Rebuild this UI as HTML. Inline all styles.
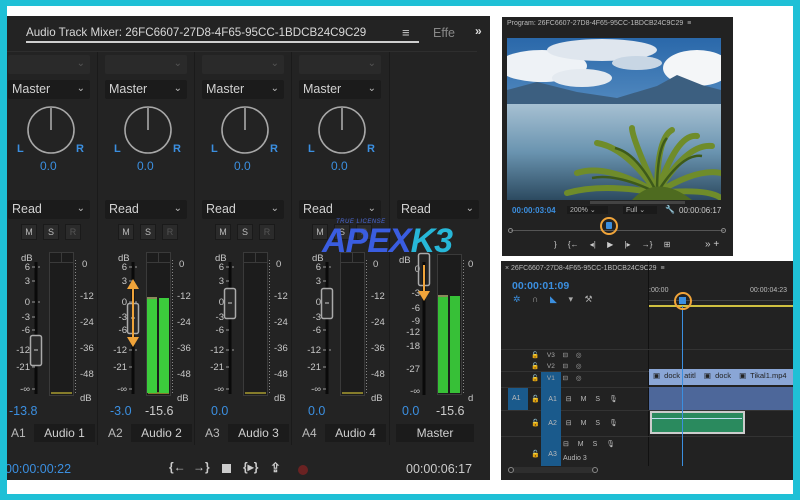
<!DOCTYPE html>
<html><head><meta charset="utf-8"><style>
*{margin:0;padding:0;box-sizing:border-box}
body{width:800px;height:500px;background:#1fc0d6;position:relative;overflow:hidden;font-family:"Liberation Sans",sans-serif}
.a{position:absolute}
.wh{left:7px;top:6px;width:786px;height:488px;background:#fff}
.mix{left:7px;top:16px;width:483px;height:464px;background:#232323;overflow:hidden}
.s{position:absolute;top:0;width:97px;height:500px}
.dd{position:absolute;height:19px;background:#1b1b1b;border-radius:2px;color:#d2d2d2;font-size:12.5px;line-height:19px;padding-left:4px}
.dd i{position:absolute;right:5px;top:-1px;font-style:normal;font-size:10px;color:#bbb}
.bl{color:#3b8fe0}
.btn{position:absolute;top:224px;width:16px;height:16px;border:1px solid #1a1a1a;background:#2b2b2b;color:#bbb;font-size:9px;line-height:14px;text-align:center}
.tl{position:absolute;top:424px;height:18px;background:#1b1b1b;color:#d0d0d0;font-size:12px;line-height:18px;text-align:center}
.tr{position:absolute;top:460px;font-size:13px;color:#ccc;font-weight:bold}
</style></head><body>
<div class="a wh"></div>

<!-- MIXER -->
<div class="a mix">
<div class="a" style="left:19px;top:10px;color:#d8d8d8;font-size:11.6px;white-space:nowrap">Audio Track Mixer: 26FC6607-27D8-4F65-95CC-1BDCB24C9C29</div>
<div class="a" style="left:395px;top:9px;color:#ccc;font-size:13px">≡</div>
<div class="a" style="left:426px;top:10px;color:#888;font-size:12.5px">Effe</div>
<div class="a" style="left:468px;top:8px;color:#ddd;font-size:12px;font-weight:bold">»</div>
<div class="a" style="left:19px;top:25px;width:393px;height:2px;background:#cfcfcf"></div>
<div class="a" style="left:0;top:35px;width:470px;height:1px;background:#2e2e2e"></div>

<div class="a" style="left:-7px;top:-16px;width:500px;height:500px">
<div class="a" style="left:97px;top:52px;width:1px;height:393px;background:#1a1a1a"></div>
<div class="a" style="left:194px;top:52px;width:1px;height:393px;background:#1a1a1a"></div>
<div class="a" style="left:291px;top:52px;width:1px;height:393px;background:#1a1a1a"></div>
<div class="a" style="left:389px;top:52px;width:1px;height:393px;background:#1a1a1a"></div>

<div class="s" style="left:0">
<div class="dd" style="left:8px;top:55px;width:82px;background:#2a2a2a"><i style="color:#555">⌄</i></div>
<div class="dd" style="left:8px;top:80px;width:82px">Master<i>⌄</i></div>
<svg class="a" style="left:26px;top:105px" width="50" height="50"><circle cx="25" cy="25" r="23" fill="none" stroke="#a8a8a8" stroke-width="1.6"/><line x1="25" y1="3" x2="25" y2="25" stroke="#a8a8a8" stroke-width="1.6"/></svg>
<div class="a bl" style="left:17px;top:143px;font-size:11px;font-weight:bold">L</div>
<div class="a bl" style="left:76px;top:143px;font-size:11px;font-weight:bold">R</div>
<div class="a bl" style="left:40px;top:159px;font-size:12px">0.0</div>
<div class="dd" style="left:8px;top:200px;width:82px">Read<i>⌄</i></div>
<div class="btn" style="left:21px">M</div><div class="btn" style="left:43px">S</div><div class="btn" style="left:65px;color:#555">R</div>
</div>
<div class="s" style="left:97px">
<div class="dd" style="left:8px;top:55px;width:82px;background:#2a2a2a"><i style="color:#555">⌄</i></div>
<div class="dd" style="left:8px;top:80px;width:82px">Master<i>⌄</i></div>
<svg class="a" style="left:26px;top:105px" width="50" height="50"><circle cx="25" cy="25" r="23" fill="none" stroke="#a8a8a8" stroke-width="1.6"/><line x1="25" y1="3" x2="25" y2="25" stroke="#a8a8a8" stroke-width="1.6"/></svg>
<div class="a bl" style="left:17px;top:143px;font-size:11px;font-weight:bold">L</div>
<div class="a bl" style="left:76px;top:143px;font-size:11px;font-weight:bold">R</div>
<div class="a bl" style="left:40px;top:159px;font-size:12px">0.0</div>
<div class="dd" style="left:8px;top:200px;width:82px">Read<i>⌄</i></div>
<div class="btn" style="left:21px">M</div><div class="btn" style="left:43px">S</div><div class="btn" style="left:65px;color:#555">R</div>
</div>
<div class="s" style="left:194px">
<div class="dd" style="left:8px;top:55px;width:82px;background:#2a2a2a"><i style="color:#555">⌄</i></div>
<div class="dd" style="left:8px;top:80px;width:82px">Master<i>⌄</i></div>
<svg class="a" style="left:26px;top:105px" width="50" height="50"><circle cx="25" cy="25" r="23" fill="none" stroke="#a8a8a8" stroke-width="1.6"/><line x1="25" y1="3" x2="25" y2="25" stroke="#a8a8a8" stroke-width="1.6"/></svg>
<div class="a bl" style="left:17px;top:143px;font-size:11px;font-weight:bold">L</div>
<div class="a bl" style="left:76px;top:143px;font-size:11px;font-weight:bold">R</div>
<div class="a bl" style="left:40px;top:159px;font-size:12px">0.0</div>
<div class="dd" style="left:8px;top:200px;width:82px">Read<i>⌄</i></div>
<div class="btn" style="left:21px">M</div><div class="btn" style="left:43px">S</div><div class="btn" style="left:65px;color:#555">R</div>
</div>
<div class="s" style="left:291px">
<div class="dd" style="left:8px;top:55px;width:82px;background:#2a2a2a"><i style="color:#555">⌄</i></div>
<div class="dd" style="left:8px;top:80px;width:82px">Master<i>⌄</i></div>
<svg class="a" style="left:26px;top:105px" width="50" height="50"><circle cx="25" cy="25" r="23" fill="none" stroke="#a8a8a8" stroke-width="1.6"/><line x1="25" y1="3" x2="25" y2="25" stroke="#a8a8a8" stroke-width="1.6"/></svg>
<div class="a bl" style="left:17px;top:143px;font-size:11px;font-weight:bold">L</div>
<div class="a bl" style="left:76px;top:143px;font-size:11px;font-weight:bold">R</div>
<div class="a bl" style="left:40px;top:159px;font-size:12px">0.0</div>
<div class="dd" style="left:8px;top:200px;width:82px">Read<i>⌄</i></div>
<div class="btn" style="left:21px">M</div><div class="btn" style="left:43px">S</div><div class="btn" style="left:65px;color:#555">R</div>
</div>
<div class="s" style="left:389px">
<div class="dd" style="left:8px;top:200px;width:82px">Read<i>⌄</i></div>
</div>

<svg class="a" style="left:0;top:245px" width="490" height="160" font-family="Liberation Sans" font-size="9.5" fill="#c8c8c8">
<defs>
<g id="fd">
<text x="21" y="16" fill="#c8c8c8">dB</text>
<g text-anchor="end"><text x="30" y="25">6</text><text x="30" y="39">3</text><text x="30" y="60">0</text><text x="30" y="75">-3</text><text x="30" y="88">-6</text><text x="30" y="108">-12</text><text x="30" y="125">-21</text><text x="30" y="147">-∞</text></g>
<line x1="36" y1="17" x2="36" y2="149" stroke="#0a0a0a" stroke-width="3"/>
<g stroke="#999" stroke-width="1"><line x1="32" y1="22" x2="35" y2="22"/><line x1="32" y1="36" x2="35" y2="36"/><line x1="32" y1="57" x2="35" y2="57"/><line x1="32" y1="72" x2="35" y2="72"/><line x1="32" y1="85" x2="35" y2="85"/><line x1="32" y1="105" x2="35" y2="105"/><line x1="32" y1="122" x2="35" y2="122"/><line x1="32" y1="144" x2="35" y2="144"/><line x1="38" y1="22" x2="40" y2="22"/><line x1="38" y1="57" x2="40" y2="57"/><line x1="38" y1="105" x2="40" y2="105"/></g>
<rect x="49.5" y="7.5" width="24" height="143" fill="#1c1c1c" stroke="#3a3a3a"/>
<line x1="49" y1="17.5" x2="74" y2="17.5" stroke="#3a3a3a"/><line x1="61.5" y1="8" x2="61.5" y2="17" stroke="#3a3a3a"/>
<line x1="51" y1="148" x2="72" y2="148" stroke="#a89c30" stroke-width="1.5"/>
<line x1="75.5" y1="15" x2="75.5" y2="150" stroke="#888" stroke-dasharray="1 2"/>
<text x="82" y="22">0</text><text x="80" y="54">-12</text><text x="80" y="80">-24</text><text x="80" y="106">-36</text><text x="80" y="132">-48</text><text x="80" y="156">dB</text>
</g>
</defs>
<use href="#fd" x="0"/><use href="#fd" x="97"/><use href="#fd" x="194"/><use href="#fd" x="291"/>
<rect x="30.5" y="90.5" width="11" height="30" rx="2" fill="#2a2a2a" stroke="#aaa" stroke-width="1.5"/><line x1="34" y1="105" x2="38" y2="105" stroke="#ccc"/>
<rect x="127.5" y="58.5" width="11" height="30" rx="2" fill="#2a2a2a" stroke="#aaa" stroke-width="1.5"/><line x1="131" y1="73" x2="135" y2="73" stroke="#ccc"/>
<rect x="224.5" y="43.5" width="11" height="30" rx="2" fill="#2a2a2a" stroke="#aaa" stroke-width="1.5"/><line x1="228" y1="58" x2="232" y2="58" stroke="#ccc"/>
<rect x="321.5" y="43.5" width="11" height="30" rx="2" fill="#2a2a2a" stroke="#aaa" stroke-width="1.5"/><line x1="325" y1="58" x2="329" y2="58" stroke="#ccc"/>
<line x1="133" y1="40" x2="133" y2="96" stroke="#f0a43a" stroke-width="2"/>
<polygon points="127,44 133,34 139,44" fill="#f0a43a"/><polygon points="127,92 133,102 139,92" fill="#f0a43a"/>
<rect x="147" y="52" width="10" height="96" fill="#3ccc3c"/><rect x="159" y="53" width="10" height="95" fill="#3ccc3c"/>
<rect x="147" y="52" width="10" height="2" fill="#8a8a5a"/>
<text x="399" y="18">dB</text>
<g text-anchor="end"><text x="420" y="27">0</text><text x="420" y="51">-3</text><text x="420" y="66">-6</text><text x="420" y="79">-9</text><text x="420" y="90">-12</text><text x="420" y="104">-18</text><text x="420" y="127">-27</text><text x="420" y="149">-∞</text></g>
<line x1="424" y1="17" x2="424" y2="150" stroke="#0a0a0a" stroke-width="3"/>
<rect x="418.5" y="8.5" width="11" height="32" rx="2" fill="none" stroke="#aaa" stroke-width="1.5"/>
<line x1="424" y1="20" x2="424" y2="50" stroke="#f0a43a" stroke-width="2"/><polygon points="418,46 424,56 430,46" fill="#f0a43a"/>
<rect x="437.5" y="9.5" width="24" height="140" fill="#1c1c1c" stroke="#3a3a3a"/>
<rect x="438" y="52" width="10" height="96" fill="#37c037"/><rect x="450" y="51" width="10" height="97" fill="#37c037"/>
<rect x="438" y="50" width="10" height="2" fill="#8a8a5a"/>
<line x1="463.5" y1="15" x2="463.5" y2="150" stroke="#888" stroke-dasharray="1 2"/>
<text x="468" y="22">0</text><text x="468" y="156">d</text>
</svg>

<div class="a bl" style="left:9px;top:404px;font-size:12.5px">-13.8</div>
<div class="a bl" style="left:110px;top:404px;font-size:12.5px">-3.0</div>
<div class="a" style="left:145px;top:404px;font-size:12.5px;color:#ccc">-15.6</div>
<div class="a bl" style="left:211px;top:404px;font-size:12.5px">0.0</div>
<div class="a bl" style="left:308px;top:404px;font-size:12.5px">0.0</div>
<div class="a bl" style="left:402px;top:404px;font-size:12.5px">0.0</div>
<div class="a" style="left:436px;top:404px;font-size:12.5px;color:#ccc">-15.6</div>
<div class="a" style="left:11px;top:426px;font-size:12px;color:#bbb">A1</div><div class="tl" style="left:34px;width:61px">Audio 1</div>
<div class="a" style="left:108px;top:426px;font-size:12px;color:#bbb">A2</div><div class="tl" style="left:131px;width:61px">Audio 2</div>
<div class="a" style="left:205px;top:426px;font-size:12px;color:#bbb">A3</div><div class="tl" style="left:228px;width:61px">Audio 3</div>
<div class="a" style="left:302px;top:426px;font-size:12px;color:#bbb">A4</div><div class="tl" style="left:325px;width:61px">Audio 4</div>
<div class="tl" style="left:396px;width:78px">Master</div>
<div class="a bl" style="left:5px;top:462px;font-size:12.5px">00:00:00:22</div>
<div class="a" style="left:406px;top:462px;font-size:12.5px;color:#ccc">00:00:06:17</div>
<div class="tr" style="left:169px;font-size:12px">{←</div>
<div class="tr" style="left:193px;font-size:12px">→}</div>
<div class="a" style="left:222px;top:464px;width:9px;height:9px;background:#ccc"></div>
<div class="tr" style="left:243px;font-size:12px">{▸}</div>
<div class="tr" style="left:270px;font-size:13px">⇪</div>
<div class="a" style="left:298px;top:465px;width:10px;height:10px;border-radius:50%;background:#6a2222"></div>
</div>
</div>

<div class="a" style="left:336px;top:219px;font-size:6px;color:#4a68d8;font-style:italic;letter-spacing:.5px">TRUE LICENSE</div>
<div class="a" style="left:322px;top:224px;font-size:34px;font-weight:bold;font-style:italic;color:#3a5de0;letter-spacing:-1px;line-height:34px">APEX<span style="color:#27b7d8">K3</span></div>

<!-- PROGRAM MONITOR -->
<div class="a" style="left:502px;top:17px;width:231px;height:239px;background:#222"></div>
<div class="a" style="left:507px;top:20px;font-size:7px;color:#bbb">Program: 26FC6607-27D8-4F65-95CC-1BDCB24C9C29 &nbsp;≡</div>
<svg class="a" style="left:507px;top:38px" width="214" height="162">
<defs>
<linearGradient id="sky" x1="0" y1="0" x2="0" y2="1"><stop offset="0" stop-color="#2a68aa"/><stop offset="1" stop-color="#8ab8dc"/></linearGradient>
<linearGradient id="wat" x1="0" y1="0" x2="0" y2="1"><stop offset="0" stop-color="#a6c0d2"/><stop offset=".5" stop-color="#6a94b0"/><stop offset="1" stop-color="#2c4a60"/></linearGradient>
</defs>
<rect width="214" height="162" fill="url(#sky)"/>
<ellipse cx="35" cy="28" rx="45" ry="16" fill="#eef2f6"/>
<ellipse cx="95" cy="12" rx="55" ry="11" fill="#dfe6ee"/>
<ellipse cx="75" cy="40" rx="30" ry="9" fill="#e4eaf0"/>
<ellipse cx="130" cy="25" rx="25" ry="7" fill="#c8d6e4"/>
<ellipse cx="190" cy="30" rx="34" ry="18" fill="#f4f6f8"/>
<path d="M0 52 L30 44 L70 54 L110 60 L150 48 L170 37 L195 47 L214 52 L214 68 L0 68Z" fill="#3c5f80"/>
<rect y="66" width="214" height="96" fill="url(#wat)"/>
<g stroke="#6f8c2a" stroke-width="6" fill="none" stroke-linecap="round">
<path d="M150 155 Q120 110 90 105"/><path d="M150 155 Q100 125 70 135"/><path d="M150 155 Q125 100 125 90"/><path d="M150 155 Q150 100 165 92"/><path d="M150 155 Q180 105 205 108"/><path d="M150 155 Q190 130 214 135"/><path d="M150 155 Q170 95 190 98"/><path d="M150 155 Q95 145 60 155"/><path d="M150 155 Q200 150 214 160"/>
</g>
<g stroke="#3d5a1a" stroke-width="2.5" fill="none"><path d="M150 155 Q130 115 108 110"/><path d="M150 155 Q175 115 195 118"/><path d="M150 155 Q150 110 160 100"/><path d="M150 155 Q110 135 85 140"/></g>
<path d="M125 162 Q150 135 185 162Z" fill="#4e6b20"/>
</svg>
<div class="a" style="left:590px;top:201px;width:95px;height:3px;background:#444"></div>
<div class="a bl" style="left:512px;top:206px;font-size:8px;font-weight:bold">00:00:03:04</div>
<div class="a" style="left:567px;top:206px;font-size:7px;color:#bbb;background:#1a1a1a;padding:0 12px 0 3px">200% ⌄</div>
<div class="a" style="left:623px;top:206px;font-size:7px;color:#bbb;background:#1a1a1a;padding:0 12px 0 3px">Full ⌄</div>
<div class="a" style="left:665px;top:205px;font-size:8px;color:#ccc">🔧</div>
<div class="a" style="left:679px;top:206px;font-size:8px;color:#ccc">00:00:06:17</div>
<div class="a" style="left:511px;top:230px;width:213px;height:1px;background:#555"></div>
<div class="a" style="left:508px;top:228px;width:5px;height:5px;border:1px solid #888;border-radius:50%"></div>
<div class="a" style="left:721px;top:228px;width:5px;height:5px;border:1px solid #888;border-radius:50%"></div>
<div class="a" style="left:600px;top:217px;width:18px;height:18px;border:2px solid #f0a43a;border-radius:50%"></div>
<div class="a" style="left:606px;top:222px;width:6px;height:7px;background:#3b8fe0;border-radius:1px"></div>
<div class="a" style="left:554px;top:240px;font-size:8px;color:#ccc;word-spacing:9px">} {← ◂| ▶ |▸ →} ⊞</div>
<div class="a" style="left:705px;top:239px;font-size:10px;color:#ccc">» +</div>

<!-- TIMELINE -->
<div class="a" style="left:501px;top:261px;width:292px;height:219px;background:#222"></div>
<div class="a" style="left:505px;top:265px;font-size:7px;color:#bbb">× 26FC6607-27D8-4F65-95CC-1BDCB24C9C29 &nbsp;≡</div>
<div class="a bl" style="left:512px;top:280px;font-size:10.5px;font-weight:bold">00:00:01:09</div>
<div class="a" style="left:513px;top:294px;font-size:9px;color:#aaa;word-spacing:9px"><span class="bl">✲</span> ∩ <span class="bl">◣</span> ▾ ⚒</div>
<div class="a" style="left:649px;top:287px;font-size:7px;color:#bbb">:00:00</div>
<div class="a" style="left:750px;top:287px;font-size:7px;color:#bbb">00:00:04:23</div>
<div class="a" style="left:649px;top:305px;width:144px;height:2px;background:#d0c040"></div>
<div class="a" style="left:649px;top:300px;width:144px;height:1px;background:#444"></div>
<div class="a" style="left:648px;top:261px;width:1px;height:205px;background:#111"></div>
<div class="a" style="left:501px;top:349px;width:292px;height:1px;background:#333"></div>
<div class="a" style="left:501px;top:371px;width:292px;height:1px;background:#333"></div>
<div class="a" style="left:501px;top:387px;width:292px;height:1px;background:#333"></div>
<div class="a" style="left:501px;top:410px;width:292px;height:1px;background:#333"></div>
<div class="a" style="left:501px;top:436px;width:292px;height:1px;background:#333"></div>
<div class="a" style="left:541px;top:372px;width:20px;height:16px;background:#1a5a8c"></div>
<div class="a" style="left:541px;top:388px;width:20px;height:78px;background:#1a5a8c"></div>
<div class="a" style="left:508px;top:388px;width:20px;height:22px;background:#1a5a8c"></div>
<div class="a" style="left:531px;top:350px;font-size:6.5px;color:#aaa;line-height:11px;word-spacing:6px">🔓 V3 ⊟ ◎<br>🔓 V2 ⊟ ◎<br><span style="line-height:14px">🔓 V1 ⊟ ◎</span></div>
<div class="a" style="left:512px;top:395px;font-size:7px;color:#bbb">A1</div>
<div class="a" style="left:531px;top:395px;font-size:7px;color:#bbb;word-spacing:7px">🔓 A1 ⊟ M S 🎙</div>
<div class="a" style="left:531px;top:419px;font-size:7px;color:#bbb;word-spacing:7px">🔓 A2 ⊟ M S 🎙</div>
<div class="a" style="left:563px;top:440px;font-size:7px;color:#bbb;word-spacing:7px">⊟ M S 🎙</div>
<div class="a" style="left:531px;top:450px;font-size:7px;color:#bbb;word-spacing:7px">🔓 A3</div>
<div class="a" style="left:563px;top:455px;font-size:7px;color:#bbb">Audio 3</div>
<div class="a" style="left:649px;top:369px;width:144px;height:16px;background:#8aa6d6"></div>
<div class="a" style="left:653px;top:371px;font-size:7.5px;color:#222;word-spacing:2px">▣ dock atitl &nbsp;▣ dock &nbsp;▣ Tikal1.mp4</div>
<div class="a" style="left:649px;top:387px;width:144px;height:23px;background:#4d679a"></div>
<div class="a" style="left:650px;top:411px;width:95px;height:23px;background:#2a8a5e;border:2px solid #ccc"></div>
<div class="a" style="left:652px;top:418px;width:90px;height:1px;background:#bde"></div>
<div class="a" style="left:682px;top:306px;width:1px;height:160px;background:#3b8fe0"></div>
<div class="a" style="left:674px;top:292px;width:18px;height:18px;border:2px solid #f0a43a;border-radius:50%"></div>
<div class="a" style="left:679px;top:297px;width:7px;height:7px;background:#3b8fe0"></div>
<div class="a" style="left:512px;top:467px;width:82px;height:6px;background:#2e2e2e;border-radius:3px"></div>
<div class="a" style="left:508px;top:467px;width:6px;height:6px;border:1px solid #888;border-radius:50%"></div>
<div class="a" style="left:592px;top:467px;width:6px;height:6px;border:1px solid #888;border-radius:50%"></div>
</body></html>
